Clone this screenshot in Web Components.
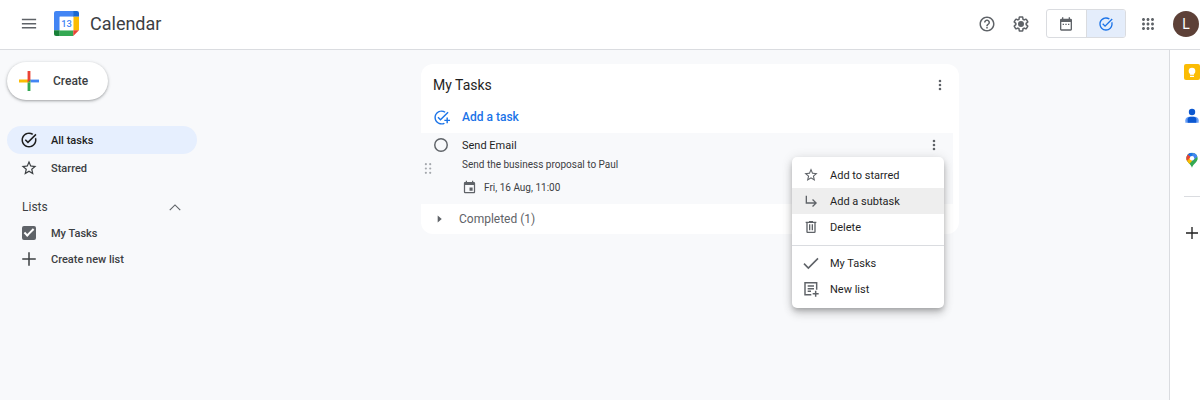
<!DOCTYPE html>
<html lang="en">
<head>
<meta charset="utf-8">
<meta name="viewport" content="width=device-width, initial-scale=1">
<title>Calendar - Tasks</title>
<style>
  html, body { height: 100%; }
  body {
    margin: 0;
    font-family: Roboto, "Liberation Sans", sans-serif;
    font-size: 11px;
    font-weight: 500;
    color: #1f1f1f;
    background: #f8f9fb;
  }
</style>
</head>
<body>
<tasks-app></tasks-app>

<script>
const ICONS = {
  menu: '<path d="M2.500 5h19v2h-19zm0 5.500h19v2h-19zm0 5.500h19v2h-19z"/>',
  help: '<path d="M11 18h2v-2h-2v2zm1-16C6.480 2 2 6.480 2 12s4.480 10 10 10 10-4.480 10-10S17.520 2 12 2zm0 18c-4.410 0-8-3.590-8-8s3.590-8 8-8 8 3.590 8 8-3.590 8-8 8zm0-14c-2.210 0-4 1.790-4 4h2c0-1.100.9-2 2-2s2 .9 2 2c0 2-3 1.750-3 5h2c0-2.250 3-2.500 3-5 0-2.210-1.790-4-4-4z"/>',
  gear: '<path d="M13.850 22.250h-3.700c-.74 0-1.360-.54-1.450-1.270l-.27-1.890c-.27-.14-.53-.29-.79-.46l-1.800.72c-.7.260-1.470-.03-1.810-.65L2.200 15.530c-.35-.66-.2-1.440.36-1.880l1.530-1.190c-.01-.15-.02-.3-.02-.46 0-.15.010-.31.020-.46l-1.520-1.190c-.59-.45-.74-1.260-.37-1.880l1.850-3.190c.34-.62 1.110-.9 1.790-.63l1.810.730c.26-.17.520-.32.780-.46l.27-1.910c.09-.7.710-1.250 1.440-1.250h3.700c.74 0 1.360.540 1.450 1.270l.27 1.890c.27.140.530.290.790.460l1.800-.72c.71-.26 1.480.030 1.820.650l1.840 3.180c.36.660.2 1.440-.36 1.880l-1.520 1.190c.01.150.020.3.020.460s-.01.310-.02.460l1.520 1.190c.56.450.720 1.230.370 1.860l-1.860 3.220c-.34.620-1.110.9-1.800.630l-1.800-.72c-.26.170-.52.320-.78.460l-.27 1.910c-.1.680-.72 1.220-1.460 1.220zm-3.230-2h2.760l.37-2.550.53-.22c.44-.18.880-.44 1.340-.78l.45-.34 2.380.960 1.380-2.400-2.030-1.580.07-.56c.03-.26.060-.51.060-.78s-.03-.53-.06-.78l-.07-.56 2.030-1.580-1.390-2.400-2.390.960-.45-.35c-.42-.32-.87-.58-1.330-.77l-.52-.22-.37-2.550h-2.760l-.37 2.550-.53.210c-.44.190-.88.440-1.340.790l-.45.330-2.380-.95-1.390 2.390 2.030 1.580-.07.560a7 7 0 0 0-.06.790c0 .26.020.530.060.780l.07.560-2.030 1.580 1.380 2.400 2.390-.96.450.350c.43.330.860.580 1.330.770l.53.220.38 2.550z"/><circle cx="12" cy="12" r="4"/>',
  calendar: '<path d="M19 4h-1V2h-2v2H8V2H6v2H5a2 2 0 0 0-2 2v14c0 1.100.9 2 2 2h14a2 2 0 0 0 2-2V6a2 2 0 0 0-2-2zm0 16H5V9h14v11zM7 11.500h2v2H7zm4 0h2v2h-2zm4 0h2v2h-2z"/>',
  event: '<path d="M17 12h-5v5h5v-5zM16 1v2H8V1H6v2H5c-1.110 0-2 .9-2 2v14a2 2 0 0 0 2 2h14c1.100 0 2-.9 2-2V5a2 2 0 0 0-2-2h-1V1h-2zm3 18H5V8h14v11z"/>',
  done: '<path d="M22 5.180 10.590 16.600l-4.240-4.240 1.410-1.410 2.830 2.830 10-10L22 5.180zM19.790 10.220c.13.570.210 1.170.210 1.780 0 4.420-3.580 8-8 8s-8-3.580-8-8 3.580-8 8-8c1.580 0 3.040.460 4.280 1.250l1.440-1.440A9.900 9.900 0 0 0 12 2C6.480 2 2 6.480 2 12s4.480 10 10 10 10-4.480 10-10c0-1.190-.22-2.330-.6-3.390l-1.610 1.610z"/>',
  addTask: '<path d="M22 5.180 10.590 16.600l-4.240-4.240 1.410-1.410 2.830 2.830 10-10L22 5.180zM12 20c-4.410 0-8-3.590-8-8s3.590-8 8-8c1.570 0 3.040.460 4.280 1.250l1.450-1.450A10.020 10.020 0 0 0 12 2C6.480 2 2 6.480 2 12s4.480 10 10 10c1.730 0 3.360-.44 4.780-1.220l-1.500-1.500c-1 .46-2.110.720-3.280.720zm7-5h-3v2h3v3h2v-3h3v-2h-3v-3h-2v3z"/>',
  apps: '<path d="M6 8c1.100 0 2-.9 2-2s-.9-2-2-2-2 .9-2 2 .9 2 2 2zm6 12c1.100 0 2-.9 2-2s-.9-2-2-2-2 .9-2 2 .9 2 2 2zm-6 0c1.100 0 2-.9 2-2s-.9-2-2-2-2 .9-2 2 .9 2 2 2zm0-6c1.100 0 2-.9 2-2s-.9-2-2-2-2 .9-2 2 .9 2 2 2zm6 0c1.100 0 2-.9 2-2s-.9-2-2-2-2 .9-2 2 .9 2 2 2zm4-8c0 1.100.9 2 2 2s2-.9 2-2-.9-2-2-2-2 .9-2 2zm-4 2c1.100 0 2-.9 2-2s-.9-2-2-2-2 .9-2 2 .9 2 2 2zm6 6c1.100 0 2-.9 2-2s-.9-2-2-2-2 .9-2 2 .9 2 2 2zm0 6c1.100 0 2-.9 2-2s-.9-2-2-2-2 .9-2 2 .9 2 2 2z"/>',
  star: '<path d="m22 9.240-7.190-.62L12 2 9.190 8.630 2 9.240l5.460 4.730L5.820 21 12 17.270 18.180 21l-1.630-7.030L22 9.240zM12 15.400l-3.760 2.270 1-4.280-3.320-2.880 4.380-.38L12 6.100l1.710 4.040 4.380.380-3.320 2.880 1 4.280L12 15.400z"/>',
  collapse: '<path d="M3 17.500l9-9 9 9" fill="none" stroke="currentColor" stroke-width="2"/>',
  plus: '<path d="M11 3h2v8h8v2h-8v8h-2v-8H3v-2h8z"/>',
  more: '<circle cx="12" cy="5" r="2.200"/><circle cx="12" cy="12" r="2.200"/><circle cx="12" cy="19" r="2.200"/>',
  circle: '<circle cx="12" cy="12" r="10.700" fill="none" stroke="currentColor" stroke-width="2.500"/>',
  drag: '<circle cx="9" cy="4" r="2"/><circle cx="17" cy="4" r="2"/><circle cx="9" cy="12" r="2"/><circle cx="17" cy="12" r="2"/><circle cx="9" cy="20" r="2"/><circle cx="17" cy="20" r="2"/>',
  arrow: '<path d="M8 6v12l7-6z"/>',
  subtask: '<path d="m21 15-6 6-1.420-1.420L17.170 16H4V4h2v10h11.170l-3.590-3.580L15 9l6 6z"/>',
  trash: '<path d="M15 4V3H9v1H4v2h1v13c0 1.100.9 2 2 2h10a2 2 0 0 0 2-2V6h1V4h-5zm2 15H7V6h10v13zM9 8h2v9H9zm4 0h2v9h-2z"/>',
  check: '<path d="m1.500 13 6.500 6.500L22.500 5" fill="none" stroke="currentColor" stroke-width="2.400"/>',
  newList: '<path d="M12.500 20.500H3v-18h17.500V13M7 7.500h9.500M7 11.500h9.500M7 15.500h5M19 14.500v9M14.500 19h9" fill="none" stroke="currentColor" stroke-width="2.200"/>',
  create: '<path fill="#ea4335" d="M10.300 0h3.400v12h-3.400z"/><path fill="#34a853" d="M10.300 13.700h3.400V24h-3.400z"/><path fill="#fbbc04" d="M0 10.300h10.300l3.400 3.400H0z"/><path fill="#4285f4" d="M13.700 10.300H24v3.400H13.700z"/><path fill="#34a853" d="m10.300 13.700 3.400-3.400v3.400z"/><path fill="#ea4335" d="M10.300 10.300h3.400l-3.400 3.400z"/>',
  logo: '<path fill="#4285f4" d="M2 0h17v5.500H5.500V18.500H0V2a2 2 0 0 1 2-2z"/><path fill="#1967d2" d="M18.500 0H22a2 2 0 0 1 2 2v3.500h-5.500z"/><path fill="#fbbc04" d="M18.500 5.500H24v13h-5.500z"/><path fill="#188038" d="M0 18.500h5.500V24H2a2 2 0 0 1-2-2z"/><path fill="#34a853" d="M5.500 18.500h13V24h-13z"/><path fill="#ea4335" d="M18.500 18.500H24L18.500 24z"/><path fill="#fff" d="M5.500 5.500h13v13h-13z"/><text x="12" y="15.500" text-anchor="middle" font-size="9" font-weight="500" fill="#4285f4">13</text>',
  keep: '<rect width="24" height="24" rx="3" fill="#fbbc04"/><circle cx="12" cy="10.500" r="5" fill="#fff"/><path fill="#fff" d="M9 14h6v2H9zM9 17.500h6v2H9z"/>',
  contacts: '<circle cx="12" cy="6" r="4.800" fill="#0b57d0"/><path fill="#669df6" d="M2 22v-3.500C2 15 5 13 8 13h8c3 0 6 2 6 5.500V22z"/><path fill="#0b57d0" d="M5.500 22v-5c0-2.500 2-4 4-4h5c2 0 4 1.500 4 4v5z"/>',
  maps: '<clipPath id="pin"><path d="M12 1c-4.800 0-8.500 3.700-8.500 8.300 0 6.200 6.500 7.700 8.500 14.200 2-6.500 8.500-8 8.500-14.200C20.500 4.700 16.800 1 12 1z"/></clipPath><g clip-path="url(#pin)"><path fill="#34a853" d="M0 0h24v24H0z"/><path fill="#fbbc04" d="M0 14 9 6l6 4-8 9z"/><path fill="#ea4335" d="M0 0h8l4 6-8 8H0z"/><path fill="#1a73e8" d="M7 0h6l-1 9-6-5z"/><path fill="#4285f4" d="M13 0h11v4L12 14V7z"/></g><circle cx="12" cy="9.300" r="3.300" fill="#fff"/>',
};

// shared by the elements that render buttons and links
const reset = `
  *, *::before { box-sizing: border-box; }
  button, a { font: inherit; color: inherit; text-decoration: none; }
  button { margin: 0; padding: 0; border: 0; background: none; cursor: pointer; }
`;

function define(name, styles, template) {
  customElements.define(name, class extends HTMLElement {
    constructor() {
      super();
      this.attachShadow({ mode: 'open' });
    }
    connectedCallback() {
      this.shadowRoot.innerHTML = `<style>${reset}${styles}</style>${template(this)}`;
    }
  });
}

define('ui-icon', `
  :host { display: block; flex: none; width: var(--size, 18px); height: var(--size, 18px); }
  svg { display: block; width: 100%; height: 100%; fill: currentColor; }
`, el => `<svg viewBox="0 0 24 24" aria-hidden="true">${ICONS[el.getAttribute('name')]}</svg>`);

define('icon-button', `
  :host { display: block; flex: none; color: #5f6368; }
  button { display: block; }
`, el => `<button type="button" aria-label="${el.getAttribute('label')}"><slot></slot></button>`);

define('view-switch', `
  :host {
    display: flex; height: 29px; width: 80px; overflow: hidden;
    border: 1px solid #dadce0; border-radius: 3px; color: #5f6368;
    box-sizing: border-box; --size: 16px;
  }
  button { flex: 1; display: flex; align-items: center; justify-content: center; }
  button[aria-pressed=true] { background: #e4edfb; color: #1a73e8; border-left: 1px solid #dadce0; }
`, () => `
  <button type="button" aria-label="Calendar view" aria-pressed="false"><ui-icon name="calendar"></ui-icon></button>
  <button type="button" aria-label="Tasks view" aria-pressed="true"><ui-icon name="done"></ui-icon></button>
`);

define('app-header', `
  :host { display: block; background: #fff; border-bottom: 1px solid #dadce0; }
  header { display: flex; align-items: center; height: 49px; padding: 0 1px 2px 20px; }
  .logo { --size: 25px; margin: 0 11px 0 16px; }
  h1 { margin: 0; flex: 1; font-size: 18px; line-height: 24px; font-weight: 400; color: #3c4043; }
  .tools { display: flex; align-items: center; gap: 13px; }
  .group { display: flex; align-items: center; gap: 16px; }
  .avatar {
    width: 26px; height: 26px; border-radius: 50%;
    background: #5d4037; color: #fff; font-size: 14px; font-weight: 400;
  }
`, () => `
  <header>
    <icon-button label="Main menu"><ui-icon name="menu"></ui-icon></icon-button>
    <ui-icon class="logo" name="logo"></ui-icon>
    <h1>Calendar</h1>
    <div class="tools">
      <div class="group">
        <icon-button label="Support"><ui-icon name="help"></ui-icon></icon-button>
        <icon-button label="Settings"><ui-icon name="gear"></ui-icon></icon-button>
        <view-switch></view-switch>
      </div>
      <div class="group">
        <icon-button label="Google apps"><ui-icon name="apps"></ui-icon></icon-button>
        <button class="avatar" type="button">L</button>
      </div>
    </div>
  </header>
`);

define('nav-link', `
  :host { display: block; --size: 18px; }
  a { display: flex; align-items: center; gap: 13px; height: 28px; padding-left: 13px; border-radius: 14px; color: #3c4043; }
  :host([active]) a { background: #e6effe; color: #1f1f1f; }
`, el => `<a href="#${el.getAttribute('to')}"><ui-icon name="${el.getAttribute('icon')}"></ui-icon><slot></slot></a>`);

define('side-bar', `
  :host { display: block; flex: none; width: 211px; padding: 12px 14px 12px 7px; box-sizing: border-box; color: #3c4043; }
  .create {
    display: flex; align-items: center; gap: 14px; height: 38px; padding: 0 20px 0 12px;
    border-radius: 19px; background: #fff; --size: 20px;
    box-shadow: 0 1px 2px rgba(60,64,67,.3), 0 1px 3px 1px rgba(60,64,67,.15);
    font-size: 12px;
  }
  nav { margin: 26px 0 12px; }
  .row { display: flex; align-items: center; gap: 13px; width: 100%; height: 26px; padding-left: 13px; }
  .lists { justify-content: space-between; padding: 0 15px; --size: 14px; }
  h2 { margin: 0; font-size: 12px; font-weight: 400; }
  input {
    appearance: none; flex: none; width: 14px; height: 14px; margin: 0 2px;
    border: 2px solid #5f6368; border-radius: 2px;
  }
  input:checked {
    background: #5f6368;
    display: grid; place-items: center;
  }
  input:checked::before {
    content: ""; width: 10px; height: 5px; margin-bottom: 3px;
    border: solid #fff; border-width: 0 0 2px 2px; transform: rotate(-45deg);
  }
`, () => `
  <button class="create" type="button"><ui-icon name="create"></ui-icon>Create</button>
  <nav>
    <nav-link to="all" icon="done" active>All tasks</nav-link>
    <nav-link to="starred" icon="star">Starred</nav-link>
  </nav>
  <div class="row lists"><h2>Lists</h2><icon-button label="Collapse lists"><ui-icon name="collapse"></ui-icon></icon-button></div>
  <label class="row"><input type="checkbox" checked>My Tasks</label>
  <button class="row" type="button"><ui-icon name="plus"></ui-icon>Create new list</button>
`);

define('menu-item', `
  :host { display: block; }
  button {
    display: flex; align-items: center; gap: 11px; width: 100%; height: 26px; padding-left: 11px;
    font-weight: 400; color: #1f1f1f; text-align: left;
  }
  ui-icon { --size: 16px; color: #5f6368; }
  :host([active]) button, button:hover { background: #eee; }
`, el => `<button type="button" role="menuitem"><ui-icon name="${el.getAttribute('icon')}"></ui-icon><slot></slot></button>`);

define('task-menu', `
  :host {
    display: block; width: 152px; padding: 5px 0 6px; box-sizing: border-box;
    background: #fff; border-radius: 5px; font-size: 11px;
    box-shadow: 0 3px 5px -1px rgba(0,0,0,.2), 0 6px 10px rgba(0,0,0,.14), 0 1px 12px rgba(0,0,0,.12);
  }
  hr { margin: 5px 0 4px; border: 0; border-top: 1px solid #dadce0; }
`, () => `
  <div role="menu">
    <menu-item icon="star">Add to starred</menu-item>
    <menu-item icon="subtask" active>Add a subtask</menu-item>
    <menu-item icon="trash">Delete</menu-item>
    <hr>
    <menu-item icon="check">My Tasks</menu-item>
    <menu-item icon="newList">New list</menu-item>
  </div>
`);

define('task-item', `
  :host { display: flex; margin-right: 6px; background: #f8f9fb; }
  .drag { --size: 13px; align-self: center; color: #a4a8ad; }
  .body { flex: 1; padding: 2px 9px 6px 0; }
  .title { display: flex; align-items: center; height: 20px; font-size: 11px; font-weight: 400; }
  label { display: flex; align-items: center; gap: 14px; flex: 1; --size: 14px; }
  label ui-icon { color: #5f6368; }
  input { position: absolute; opacity: 0; width: 14px; height: 14px; margin: 0; }
  .notes, .date { display: flex; align-items: center; margin-left: 28px; color: #3c4043; }
  .notes { height: 18px; font-size: 10px; font-weight: 400; }
  .date { height: 22px; margin-top: 3px; --size: 15px; }
  .date ui-icon { color: #5f6368; }
  .date button { display: flex; align-items: center; gap: 7px; font-size: 10px; font-weight: 400; }
  .more { position: relative; --size: 14px; width: 20px; }
  .more icon-button { display: flex; justify-content: center; }
  .more task-menu { position: absolute; right: 0; top: 19px; }
`, () => `
  <ui-icon class="drag" name="drag"></ui-icon>
  <div class="body">
    <div class="title">
      <label><input type="checkbox"><ui-icon name="circle"></ui-icon><slot></slot></label>
      <div class="more">
        <icon-button label="Task options"><ui-icon name="more"></ui-icon></icon-button>
        <task-menu></task-menu>
      </div>
    </div>
    <div class="notes"><slot name="notes"></slot></div>
    <div class="date"><button type="button"><ui-icon name="event"></ui-icon><slot name="date"></slot></button></div>
  </div>
`);

define('task-list', `
  :host { display: block; width: 100%; max-width: 538px; padding-top: 5px; background: #fff; border-radius: 12px; }
  .head { display: flex; align-items: center; justify-content: space-between; height: 32px; padding: 0 12px; --size: 14px; }
  h2 { margin: 0; font-size: 14px; font-weight: 400; }
  .add { display: flex; align-items: center; gap: 12px; height: 32px; padding-left: 12px; color: #1a73e8; font-size: 12px; --size: 17px; }
  .completed { display: flex; align-items: center; gap: 12px; height: 30px; padding-left: 12px; color: #5f6368; font-size: 12px; font-weight: 400; --size: 14px; }
`, el => `
  <div class="head">
    <h2>${el.getAttribute('heading')}</h2>
    <icon-button label="List options"><ui-icon name="more"></ui-icon></icon-button>
  </div>
  <button class="add" type="button"><ui-icon name="addTask"></ui-icon>Add a task</button>
  <slot></slot>
  <button class="completed" type="button"><ui-icon name="arrow"></ui-icon>Completed (1)</button>
`);

define('side-panel', `
  :host { display: block; flex: none; width: 31px; background: #fff; border-left: 1px solid #dadce0; box-sizing: border-box; overflow: hidden; }
  .apps { display: flex; flex-direction: column; align-items: flex-end; gap: 28px; padding-top: 14px; --size: 16px; }
  hr { width: 16px; margin: 0; border: 0; border-top: 1px solid #dadce0; }
  .add { color: #1f1f1f; }
`, () => `
  <div class="apps">
    <icon-button label="Keep"><ui-icon name="keep"></ui-icon></icon-button>
    <icon-button label="Contacts"><ui-icon name="contacts"></ui-icon></icon-button>
    <icon-button label="Maps"><ui-icon name="maps"></ui-icon></icon-button>
    <hr>
    <icon-button class="add" label="Get add-ons"><ui-icon name="plus"></ui-icon></icon-button>
  </div>
`);

define('tasks-app', `
  :host { display: flex; flex-direction: column; min-height: 100%; }
  .content { display: flex; flex: 1; }
  main { display: flex; justify-content: center; align-items: flex-start; flex: 1; min-width: 0; padding: 14px 0; }
`, () => `
  <app-header></app-header>
  <div class="content">
    <side-bar></side-bar>
    <main>
      <task-list heading="My Tasks">
        <task-item>
          Send Email
          <span slot="notes">Send the business proposal to Paul</span>
          <span slot="date">Fri, 16 Aug, 11:00</span>
        </task-item>
      </task-list>
    </main>
    <side-panel></side-panel>
  </div>
`);
</script>
</body>
</html>
